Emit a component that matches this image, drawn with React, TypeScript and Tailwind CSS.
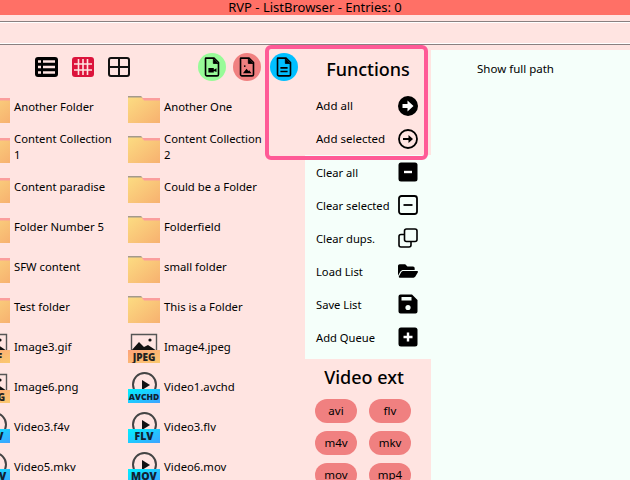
import { FaFolderOpen } from 'react-icons/fa';

type Entry = { name: string; kind: 'folder' | 'image' | 'video'; ext?: string };

const entries: Entry[] = [
  { name: 'Another Folder', kind: 'folder' },
  { name: 'Another One', kind: 'folder' },
  { name: 'Content Collection 1', kind: 'folder' },
  { name: 'Content Collection 2', kind: 'folder' },
  { name: 'Content paradise', kind: 'folder' },
  { name: 'Could be a Folder', kind: 'folder' },
  { name: 'Folder Number 5', kind: 'folder' },
  { name: 'Folderfield', kind: 'folder' },
  { name: 'SFW content', kind: 'folder' },
  { name: 'small folder', kind: 'folder' },
  { name: 'Test folder', kind: 'folder' },
  { name: 'This is a Folder', kind: 'folder' },
  { name: 'Image3.gif', kind: 'image', ext: 'GIF' },
  { name: 'Image4.jpeg', kind: 'image', ext: 'JPEG' },
  { name: 'Image6.png', kind: 'image', ext: 'PNG' },
  { name: 'Video1.avchd', kind: 'video', ext: 'AVCHD' },
  { name: 'Video3.f4v', kind: 'video', ext: 'F4V' },
  { name: 'Video3.flv', kind: 'video', ext: 'FLV' },
  { name: 'Video5.mkv', kind: 'video', ext: 'MKV' },
  { name: 'Video6.mov', kind: 'video', ext: 'MOV' },
];

const FolderIcon = () => (
  <svg width="32" height="32" viewBox="0 0 32 32" className="shrink-0">
    <defs>
      <linearGradient id="fold" x1="0" y1="0" x2="1" y2="1">
        <stop offset="0" stopColor="#fcdc82" />
        <stop offset="1" stopColor="#f7b06f" />
      </linearGradient>
    </defs>
    <path d="M0 6h14l2 3h16v24H0z" fill="url(#fold)" />
    <path d="M0 5h13l1.500 1.500H0z" fill="#a39a8c" />
    <path d="M14 7h18v2.500H16z" fill="#fb9d9d" />
  </svg>
);

const ImageIcon = ({ ext }: { ext: string }) => (
  <svg width="32" height="32" viewBox="0 0 32 32" className="shrink-0">
    <defs>
      <linearGradient id="imgb" x1="0" y1="0" x2="1" y2="1">
        <stop offset="0" stopColor="#fda37a" />
        <stop offset="1" stopColor="#fbc96e" />
      </linearGradient>
    </defs>
    <path d="M3.500 20V3.500h25V20" fill="none" stroke="#555" strokeWidth="1.400" />
    <path d="M3 20l8-9 5 5 4-2 9 6z" fill="#111" />
    <circle cx="22" cy="9" r="1.600" fill="#111" />
    <rect x="0" y="19" width="32" height="13" fill="url(#imgb)" />
    <text x="16" y="29.500" textAnchor="middle" fontFamily="Open Sans, sans-serif" fontWeight="800" fontSize="10" fill="#222">
      {ext}
    </text>
  </svg>
);

const VideoIcon = ({ ext }: { ext: string }) => (
  <svg width="32" height="32" viewBox="0 0 32 32" className="shrink-0">
    <defs>
      <linearGradient id="vidb" x1="0" y1="0" x2="1" y2="1">
        <stop offset="0" stopColor="#00f0ff" />
        <stop offset="1" stopColor="#3fa2ff" />
      </linearGradient>
    </defs>
    <circle cx="16.500" cy="13.500" r="11.500" fill="none" stroke="#444" strokeWidth="2" />
    <path d="M14 9l8 5-8 5z" fill="#111" />
    <rect x="0" y="18" width="32" height="14" fill="url(#vidb)" />
    <text
      x="16"
      y="29"
      textAnchor="middle"
      fontFamily="Open Sans, sans-serif"
      fontWeight="800"
      fontSize={ext.length > 3 ? 8.500 : 10.500}
      fill="#123"
    >
      {ext}
    </text>
  </svg>
);

const FileGlyph = ({ children }: { children: React.ReactNode }) => (
  <svg width="18" height="22" viewBox="0 0 20 22" fill="none">
    <path
      d="M3 1.200h9.200L17.200 6v13.200a1.600 1.600 0 0 1-1.600 1.600H4.400a1.600 1.600 0 0 1-1.600-1.600V2.800A1.600 1.600 0 0 1 3 1.200z"
      stroke="#000"
      strokeWidth="1.800"
    />
    <path d="M11.500 1.500V7h5.500" fill="#000" stroke="#000" strokeWidth="1" />
    {children}
  </svg>
);

const Row = ({ label, low, children }: { label: string; low?: boolean; children: React.ReactNode }) => (
  <div className="flex h-[33px] shrink-0 items-center justify-between pl-[11px] pr-[13px]">
    <span className={low ? 'mt-[2px]' : ''}>{label}</span>
    <span className="flex h-5 w-5 items-center justify-center">{children}</span>
  </div>
);

const Pill = ({ label }: { label: string }) => (
  <div className="flex h-6 w-[42px] items-center justify-center rounded-full bg-[#f08080]">{label}</div>
);

export default function App() {
  return (
    <div className="flex h-[480px] w-[630px] flex-col overflow-hidden bg-[#ffe4e1] text-[11.5px] leading-4 text-black [font-family:'Noto_Sans',sans-serif]">
      <div className="flex h-[15px] shrink-0 items-center justify-center bg-[#ff7066] text-[13px] leading-none">
        RVP - ListBrowser - Entries: 0
      </div>
      <div className="h-[6px] shrink-0" />
      <div className="h-[2px] shrink-0 border-t border-[#8a8080] bg-white" />
      <div className="h-[20px] shrink-0" />
      <div className="h-[2px] shrink-0 border-t border-white bg-[#8a8080]" />

      <div className="relative flex min-h-0 flex-1">
        {/* Left */}
        <div className="w-[305px] shrink-0 overflow-hidden">
          <div className="flex h-[42px] items-center pt-[1px]">
            <div className="ml-[35px] flex items-center gap-[14px]">
              <svg width="23" height="20" viewBox="0 0 23 20">
                <rect width="23" height="20" rx="3" fill="#000" />
                <path d="M3 4.500h3M8 4.500h12M3 10h3M8 10h12M3 15.500h3M8 15.500h12" stroke="#ffe4e1" strokeWidth="2.400" />
              </svg>
              <svg width="22" height="20" viewBox="0 0 22 20">
                <rect width="22" height="20" rx="3" fill="#dc143c" />
                <path d="M6.500 2v16M11 2v16M15.500 2v16M2 7h18M2 13h18" stroke="#ffe4e1" strokeWidth="1.600" />
              </svg>
              <svg width="22" height="20" viewBox="0 0 22 20" fill="none">
                <rect x="1" y="1" width="20" height="18" rx="2" stroke="#111" strokeWidth="2" />
                <path d="M11 1v18M1 10h20" stroke="#111" strokeWidth="2" />
              </svg>
            </div>
            <div className="ml-[68px] flex items-center gap-[7px]">
              <div className="flex h-7 w-7 items-center justify-center rounded-full bg-[#98fb98]">
                <FileGlyph>
                  <path d="M6 12h6v5H6zM12 14l3-1.500v4L12 15.500z" fill="#000" />
                </FileGlyph>
              </div>
              <div className="flex h-7 w-7 items-center justify-center rounded-full bg-[#f08080]">
                <FileGlyph>
                  <path d="M5.500 18l4-5 2 2.500 1-1 2.500 3.500z" fill="#000" />
                  <circle cx="7.500" cy="10" r="1" fill="#000" />
                </FileGlyph>
              </div>
              <div className="ml-[2px] flex h-7 w-7 items-center justify-center rounded-full bg-[#00bfff]">
                <FileGlyph>
                  <path d="M6 12h8M6 16h8" stroke="#000" strokeWidth="1.800" />
                </FileGlyph>
              </div>
            </div>
          </div>

          <div className="-ml-[22px] grid w-[300px] grid-cols-2 text-[11.300px]">
            {entries.map((entry) => (
              <div key={entry.name} className="flex h-10 items-center gap-1">
                {entry.kind === 'folder' && <FolderIcon />}
                {entry.kind === 'image' && <ImageIcon ext={entry.ext!} />}
                {entry.kind === 'video' && <VideoIcon ext={entry.ext!} />}
                <span className="max-w-[104px]">{entry.name}</span>
              </div>
            ))}
          </div>
        </div>

        {/* Functions column */}
        <div className="flex w-[126px] shrink-0 flex-col">
          <div className="flex h-[44px] shrink-0 items-center justify-center pt-[4px] text-[18px] font-medium">Functions</div>
          <Row label="Add all">
            <svg width="20" height="20" viewBox="0 0 20 20">
              <circle cx="10" cy="10" r="10" fill="#000" />
              <path d="M4.500 8h5V4.500L15.500 10l-6 5.500V12h-5z" fill="#fff" />
            </svg>
          </Row>
          <Row label="Add selected">
            <svg width="20" height="20" viewBox="0 0 20 20" fill="none">
              <circle cx="10" cy="10" r="9" stroke="#000" strokeWidth="1.800" />
              <path d="M5 9h5.500V6l4.500 4-4.500 4v-3H5z" fill="#000" />
            </svg>
          </Row>
          <div className="shrink-0 bg-[#f5fffa] pb-[6px] text-[11.200px]">
            <Row low label="Clear all">
              <svg width="20" height="20" viewBox="0 0 20 20">
                <rect x="0.500" y="0.500" width="19" height="19" rx="2.500" fill="#000" />
                <path d="M6 10h8" stroke="#fff" strokeWidth="2.400" />
              </svg>
            </Row>
            <Row low label="Clear selected">
              <svg width="20" height="20" viewBox="0 0 20 20" fill="none">
                <rect x="1" y="1" width="18" height="18" rx="2.500" stroke="#000" strokeWidth="1.800" />
                <path d="M5.500 10h9" stroke="#000" strokeWidth="1.800" />
              </svg>
            </Row>
            <Row low label="Clear dups.">
              <svg width="20" height="20" viewBox="0 0 20 20" fill="none">
                <rect x="6.500" y="1" width="12.500" height="12.500" rx="2" stroke="#000" strokeWidth="1.600" />
                <path d="M6.500 6.500H3A2 2 0 0 0 1 8.500V17a2 2 0 0 0 2 2h8a2 2 0 0 0 2-2v-3.500" stroke="#000" strokeWidth="1.600" />
              </svg>
            </Row>
            <Row low label="Load List">
              <FaFolderOpen size={20} color="#000" />
            </Row>
            <Row low label="Save List">
              <svg width="20" height="20" viewBox="0 0 20 20">
                <path d="M2.500 0.500h11.500l5.500 5.500v11.500a2 2 0 0 1-2 2h-15a2 2 0 0 1-2-2v-15a2 2 0 0 1 2-2z" fill="#000" />
                <rect x="3.500" y="3" width="10" height="3.500" fill="#f5fffa" />
                <circle cx="10" cy="13.500" r="2.600" fill="#f5fffa" />
              </svg>
            </Row>
            <Row low label="Add Queue">
              <svg width="20" height="20" viewBox="0 0 20 20">
                <rect x="0.500" y="0.500" width="19" height="19" rx="2.500" fill="#000" />
                <path d="M5.500 10h9M10 5.500v9" stroke="#fff" strokeWidth="2.400" />
              </svg>
            </Row>
          </div>
          <div className="flex h-[40px] shrink-0 items-center justify-center pb-[4px] pr-[8px] text-[18px] font-medium">Video ext</div>
          <div className="grid shrink-0 grid-cols-[42px_42px] gap-x-3 gap-y-2 pl-[10px]">
            {['avi', 'flv', 'm4v', 'mkv', 'mov', 'mp4'].map((ext) => (
              <Pill key={ext} label={ext} />
            ))}
          </div>
        </div>

        {/* Right */}
        <div className="mt-[5px] flex-1 bg-[#f5fffa] pl-[46px] pt-[11px]">Show full path</div>

        {/* Highlight frame */}
        <div className="pointer-events-none absolute left-[265px] top-0 h-[115px] w-[163px] rounded-[6px] border-4 border-[#ff5a96]" />
      </div>
    </div>
  );
}
